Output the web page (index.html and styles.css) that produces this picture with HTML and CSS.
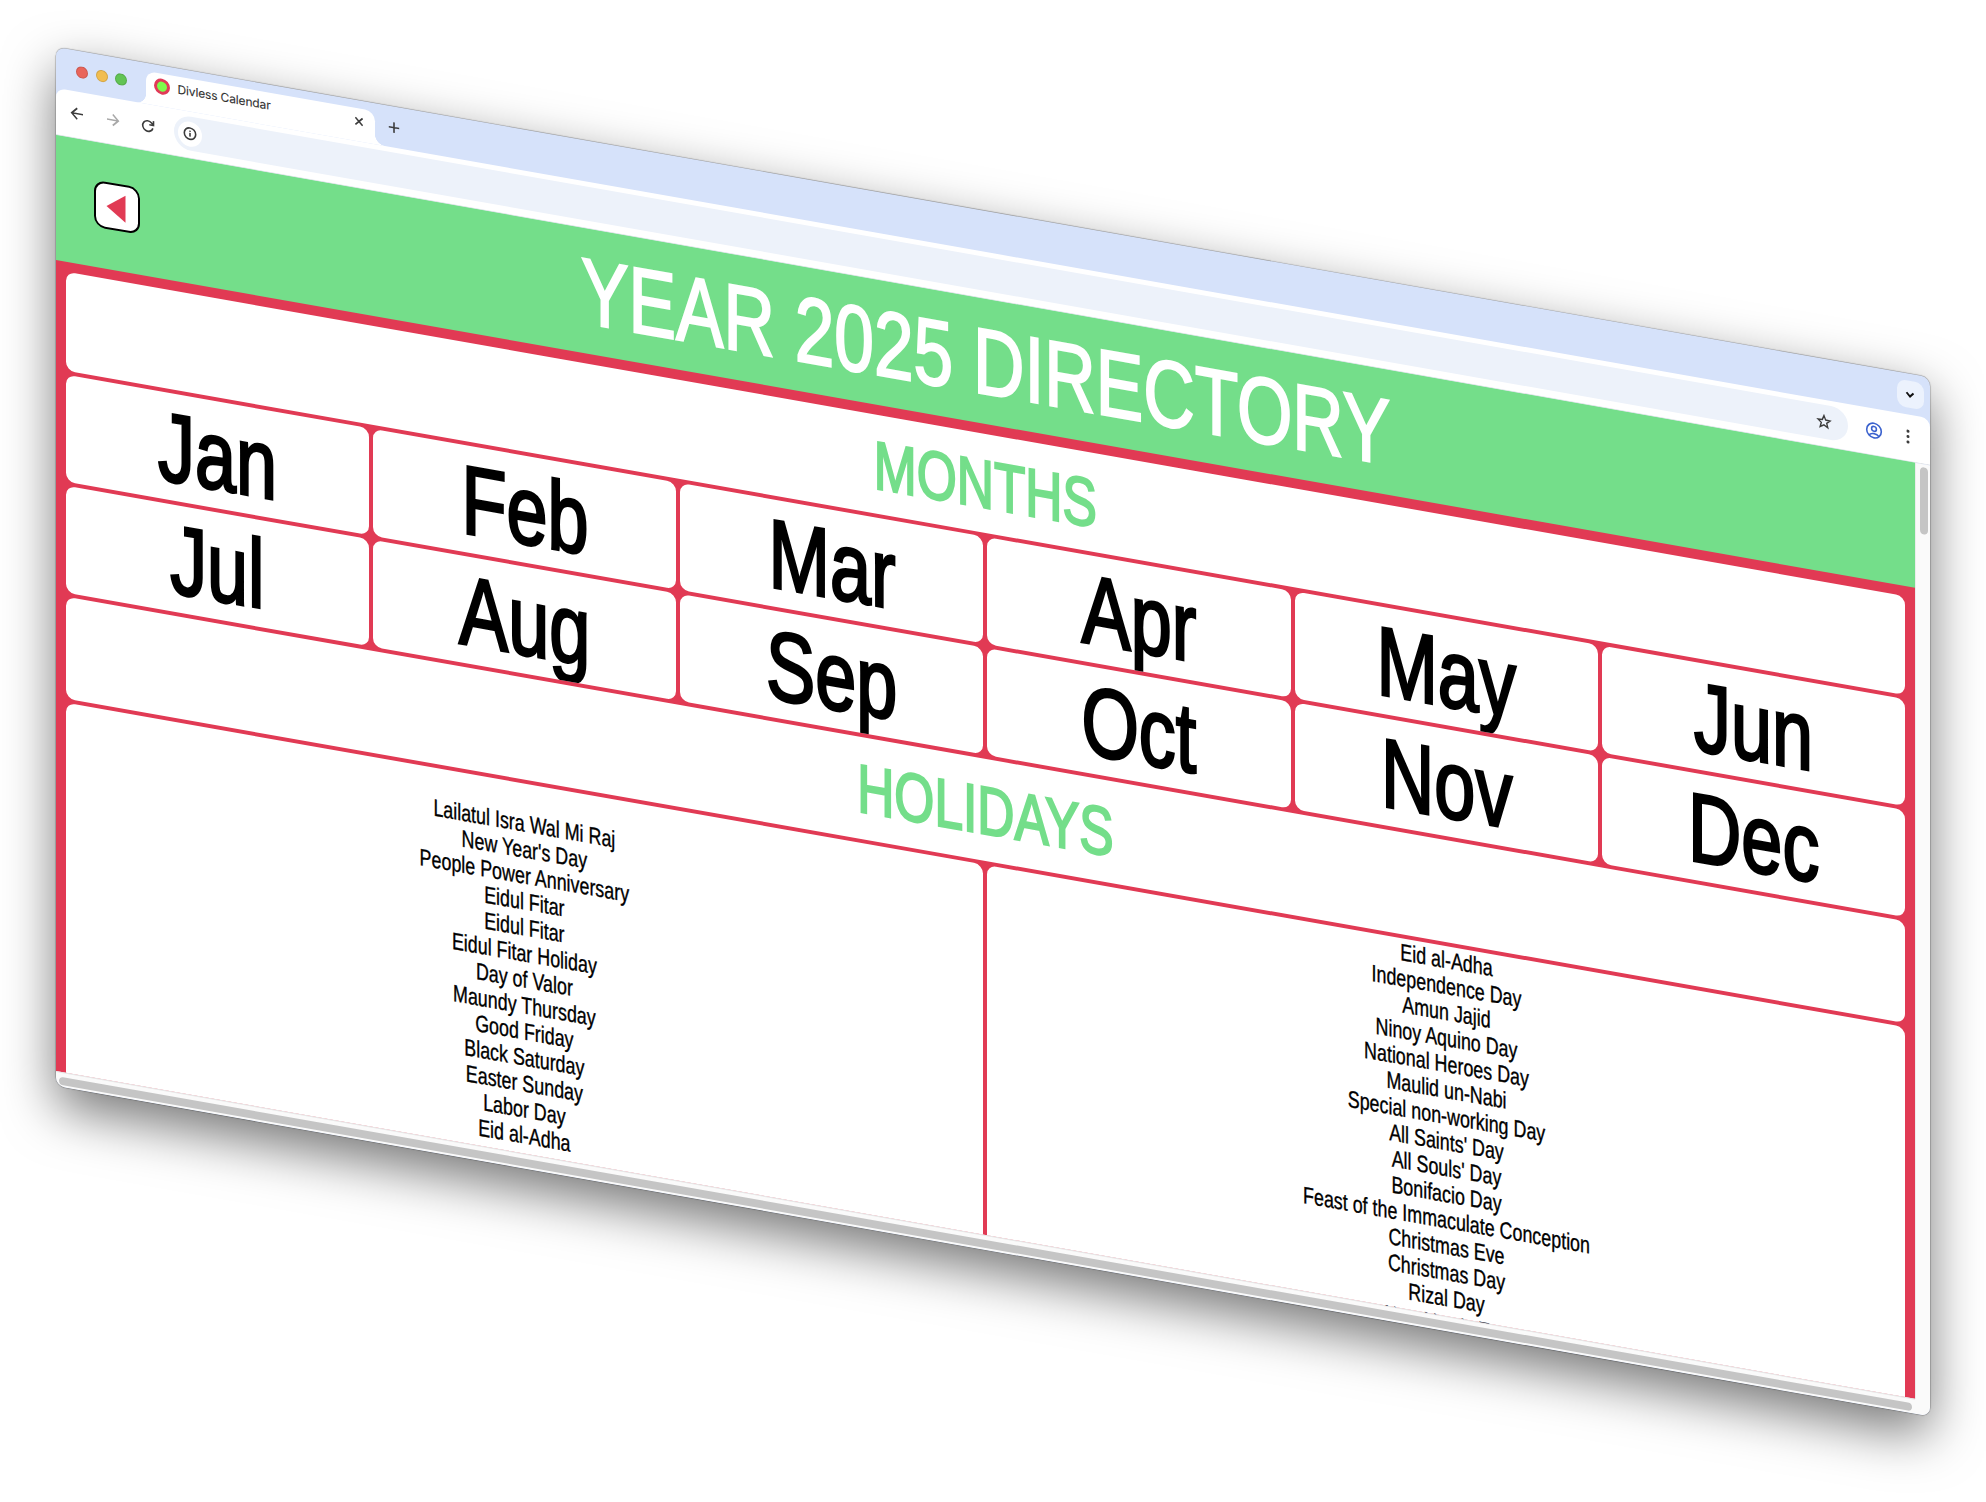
FILE: index.html
```html
<!DOCTYPE html>
<html lang="en">
<head>
<meta charset="utf-8">
<title>Divless Calendar</title>
<link rel="stylesheet" href="styles.css">
</head>
<body>
<main class="window">
  <header class="tabstrip">
    <div class="lights"><i class="light red"></i><i class="light amber"></i><i class="light lime"></i></div>
    <div class="tab">
      <i class="favicon"></i>
      <span class="tab-title">Divless Calendar</span>
      <svg class="close" width="10" height="10" viewBox="0 0 10 10"><path d="M1.4 1.4 8.6 8.6M8.6 1.4 1.4 8.6"/></svg>
    </div>
    <svg class="plus" width="12" height="12" viewBox="0 0 12 12"><path d="M6 .8V11.2M.8 6H11.2"/></svg>
    <div class="tab-search"><svg width="10" height="8" viewBox="0 0 10 8"><path d="M1.5 2 5 5.6 8.5 2"/></svg></div>
  </header>
  <nav class="toolbar">
    <svg class="nav" viewBox="0 0 16 16"><path d="M14 8H3M8.2 2.5 2.7 8l5.5 5.5"/></svg>
    <svg class="nav dim" viewBox="0 0 16 16"><path d="M2 8H13M7.8 2.5 13.3 8l-5.5 5.5"/></svg>
    <svg class="nav" viewBox="0 0 16 16"><path d="M12.9 9.2A5.2 5.2 0 1 1 11.8 4.4L13.3 6M13.5 2V6.3H9.3"/></svg>
    <div class="omnibox">
      <span class="site"><svg width="14" height="14" viewBox="0 0 14 14"><circle cx="7" cy="7" r="5.7"/><path d="M7 6.3V10M7 3.9V5.2"/></svg></span>
      <svg class="star" width="16" height="16" viewBox="0 0 16 16"><path d="M8 1.9 9.7 6 14 6.3 10.7 9.1 11.8 13.4 8 11.1 4.2 13.4 5.3 9.1 2 6.3 6.3 6Z"/></svg>
    </div>
    <svg class="profile" width="18" height="18" viewBox="0 0 18 18"><circle cx="9" cy="9" r="7.3"/><circle cx="9" cy="7.3" r="2.4"/><path d="M4 14.2C5.2 12.7 7 12.1 9 12.1S12.8 12.7 14 14.2"/></svg>
    <svg class="dots" width="4" height="16" viewBox="0 0 4 16"><circle cx="2" cy="2.6" r="1.5"/><circle cx="2" cy="8" r="1.5"/><circle cx="2" cy="13.4" r="1.5"/></svg>
  </nav>
  <div class="viewport">
    <section class="page">
      <header class="banner">
        <button class="back"><svg width="20" height="28" viewBox="0 0 20 28"><path d="M.5 14 19.5.5V27.5Z"/></svg></button>
        <h1>YEAR 2025 DIRECTORY</h1>
      </header>
      <div class="directory">
        <h2 class="cell"><span>MONTHS</span></h2>
        <div class="cell month"><span>Jan</span></div>
        <div class="cell month"><span>Feb</span></div>
        <div class="cell month"><span>Mar</span></div>
        <div class="cell month"><span>Apr</span></div>
        <div class="cell month"><span>May</span></div>
        <div class="cell month"><span>Jun</span></div>
        <div class="cell month"><span>Jul</span></div>
        <div class="cell month"><span>Aug</span></div>
        <div class="cell month"><span>Sep</span></div>
        <div class="cell month"><span>Oct</span></div>
        <div class="cell month"><span>Nov</span></div>
        <div class="cell month"><span>Dec</span></div>
        <h2 class="cell"><span>HOLIDAYS</span></h2>
        <div class="cell half">
          <ul>
            <li>Lailatul Isra Wal Mi Raj</li>
            <li>New Year's Day</li>
            <li>People Power Anniversary</li>
            <li>Eidul Fitar</li>
            <li>Eidul Fitar</li>
            <li>Eidul Fitar Holiday</li>
            <li>Day of Valor</li>
            <li>Maundy Thursday</li>
            <li>Good Friday</li>
            <li>Black Saturday</li>
            <li>Easter Sunday</li>
            <li>Labor Day</li>
            <li>Eid al-Adha</li>
          </ul>
        </div>
        <div class="cell half">
          <ul>
            <li>Eid al-Adha</li>
            <li>Independence Day</li>
            <li>Amun Jajid</li>
            <li>Ninoy Aquino Day</li>
            <li>National Heroes Day</li>
            <li>Maulid un-Nabi</li>
            <li>Special non-working Day</li>
            <li>All Saints' Day</li>
            <li>All Souls' Day</li>
            <li>Bonifacio Day</li>
            <li>Feast of the Immaculate Conception</li>
            <li>Christmas Eve</li>
            <li>Christmas Day</li>
            <li>Rizal Day</li>
            <li>New Year's Eve</li>
          </ul>
        </div>
      </div>
    </section>
    <aside class="track-y"><i class="thumb-y"></i></aside>
    <footer class="track-x"><i class="thumb-x"></i></footer>
  </div>
</main>
</body>
</html>
```
FILE: styles.css
```css
* { box-sizing: border-box; margin: 0; padding: 0; }

html, body { height: 1502px; overflow: hidden; }

body {
  padding: 47px 0 0 56px;
  background: #fff;
  font-family: "Liberation Sans", Arial, sans-serif;
}

svg { display: block; fill: none; stroke: #3c3c3c; stroke-width: 1.6; }

.window {
  display: flex;
  flex-direction: column;
  width: 1874px;
  height: 1039px;
  overflow: hidden;
  border-radius: 9px;
  background: #d6e2fa;
  transform: skewY(10deg);
  transform-origin: 0 0;
  box-shadow: 0 0 1px 0.5px rgba(0, 0, 0, 0.35), 0 20px 52px rgba(0, 0, 0, 0.53);
}

/* Tab strip */
.tabstrip { display: flex; height: 41px; padding-left: 20px; }

.lights { display: flex; align-items: center; gap: 7.7px; width: 70px; }
.light { width: 12px; height: 12px; border-radius: 50%; border: 0.5px solid rgba(0, 0, 0, 0.12); }
.light.red { background: #e9655b; }
.light.amber { background: #f1bd50; }
.light.lime { background: #62c454; }

.tab {
  position: relative;
  display: flex;
  align-items: center;
  width: 229px;
  height: 33px;
  margin-top: 8px;
  padding: 0 11px 8px 8px;
  border-radius: 10px 10px 0 0;
  background: #fff;
}
.tab::before, .tab::after {
  content: "";
  position: absolute;
  bottom: 0;
  width: 10px;
  height: 10px;
}
.tab::before { right: 100%; background: radial-gradient(circle at 0 0, transparent 9.7px, #fff 10.3px); }
.tab::after { left: 100%; background: radial-gradient(circle at 100% 0, transparent 9.7px, #fff 10.3px); }

.favicon { width: 16px; height: 16px; border: 3.5px solid #e13a58; border-radius: 50%; background: #7efb4b; }
.tab-title { flex: 1; margin-left: 7.5px; font: 12px/16px Inter, sans-serif; color: #333; letter-spacing: -0.15px; -webkit-text-stroke: 0.1px #333; }
.plus { margin: 14.5px 0 0 13px; }
.tab-search {
  display: flex;
  align-items: center;
  justify-content: center;
  width: 27.5px;
  height: 27px;
  margin: 7px 6px 0 auto;
  border-radius: 9px;
  background: #ecf2fd;
}
.tab-search svg { stroke: #111; stroke-width: 2; }

/* Toolbar */
.toolbar {
  display: flex;
  align-items: center;
  height: 47px;
  padding: 0 20px 2px 13px;
  border-radius: 9px 9px 0 0;
  border-bottom: 1px solid #e2e4e8;
  background: #fff;
}
.nav { width: 16px; height: 16px; margin-right: 19.5px; stroke-width: 1.6; }
.nav.dim { stroke: #a8a8a8; }
.omnibox {
  display: flex;
  align-items: center;
  justify-content: space-between;
  width: 1674px;
  height: 34px;
  margin-left: -2px;
  padding: 0 16px 0 4.5px;
  border-radius: 17px;
  background: #edf2fa;
}
.site { display: grid; place-items: center; width: 24px; height: 25px; border-radius: 50%; background: #fff; }
.star { stroke-width: 1.4; }
.profile { margin-left: 17px; stroke: #3b62ce; stroke-width: 1.6; }
.dots { margin-left: auto; fill: #3c3c3c; stroke: none; }

/* Page and its scrollbars */
.viewport {
  display: grid;
  grid-template: 936px 15px / 1859px 15px;
  background: #fafafa;
}
.page { overflow: hidden; background: linear-gradient(#74de8a 100px, #e13a54 0); }
.track-y { padding: 3px 0 0 4px; border-left: 1px solid #ececec; }
.thumb-y { display: block; width: 8px; height: 67px; border-radius: 4px; background: #c5c5c5; }
.track-x { padding: 4px 0 0 3px; border-top: 1px solid #e6e6e6; }
.thumb-x { display: block; width: 1853px; height: 8px; border-radius: 4px; background: #c5c5c5; }

.banner {
  display: grid;
  grid-template-columns: 46px 1fr 46px;
  align-items: center;
  height: 125px;
  padding: 0 38px;
  background: #74de8a;
}
.back {
  display: flex;
  align-items: center;
  justify-content: center;
  width: 46px;
  height: 47px;
  margin-bottom: 2px;
  padding-right: 2px;
  border: 2px solid #000;
  border-radius: 11px;
  background: #fff;
}
.back svg { fill: #e13a54; stroke: none; }

h1, h2 { font-weight: 400; white-space: nowrap; }
h1 {
  font-size: 93.5px;
  line-height: 100px;
  text-align: center;
  color: #fff;
  -webkit-text-stroke: 2.2px #fff;
  transform: scaleX(0.762);
}

.directory {
  display: grid;
  grid-template-columns: repeat(6, 1fr);
  grid-template-rows: 99px 107px 107px 102px 394px;
  gap: 4px;
  padding: 10px;
}
.cell {
  display: flex;
  align-items: center;
  justify-content: center;
  overflow: hidden;
  border-radius: 9px;
  background: #fff;
}
h2.cell { grid-column: 1 / -1; font-size: 68px; color: #74de8a; -webkit-text-stroke: 2.3px #74de8a; }
.month { padding-top: 2px; }
.month span { font-size: 97.5px; line-height: 106px; color: #000; -webkit-text-stroke: 2.8px #000; }
.half { grid-column: span 3; white-space: nowrap; }
.month span, h2 span, .half ul { transform: scaleX(0.757); }
.half ul { list-style: none; text-align: center; font-size: 23.6px; line-height: 25.96px; color: #000; -webkit-text-stroke: 0.35px #000; }
```
